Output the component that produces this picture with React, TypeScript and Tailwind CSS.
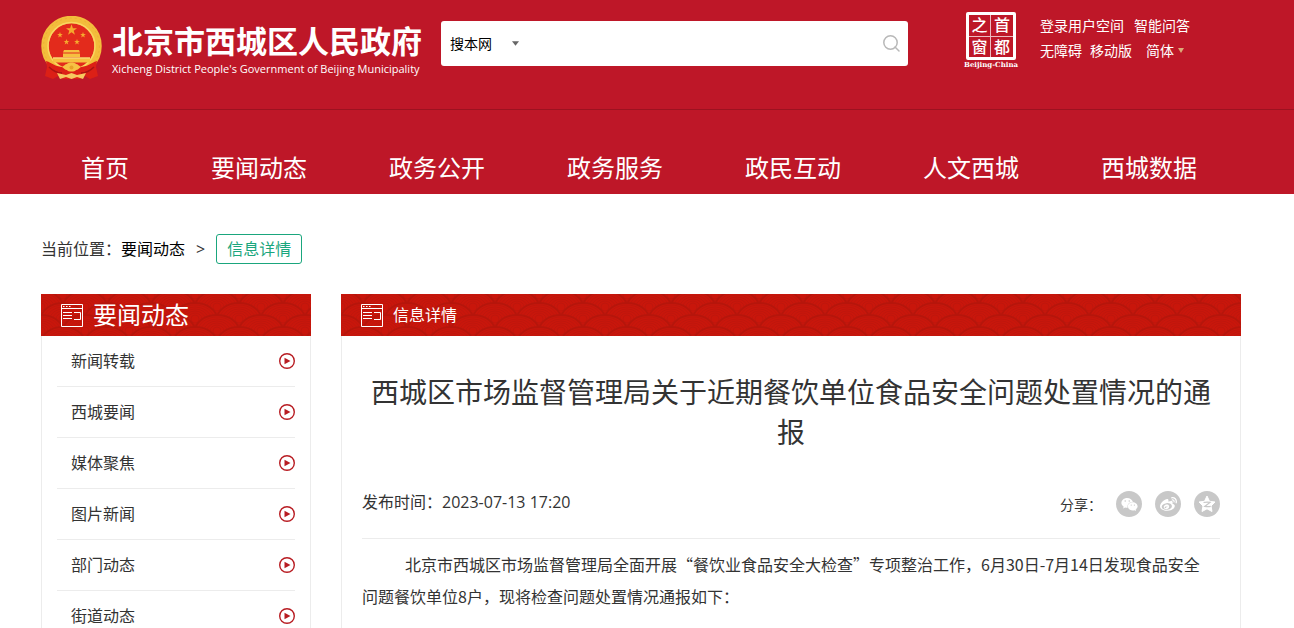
import { FaWeibo, FaWeixin } from 'react-icons/fa'

const NAV = ['首页', '要闻动态', '政务公开', '政务服务', '政民互动', '人文西城', '西城数据']
const CHANNELS = ['新闻转载', '西城要闻', '媒体聚焦', '图片新闻', '部门动态', '街道动态']

function Emblem() {
  const star = '0,-10 2.4,-3.2 9.5,-3.1 3.8,1.2 5.9,8.1 0,4 -5.9,8.1 -3.8,1.2 -9.5,-3.1 -2.4,-3.2'
  return (
    <svg viewBox="0 0 61 64" className="w-[61px] h-16" aria-hidden="true">
      <circle cx="30.5" cy="30" r="26.5" fill="#e32b1c" stroke="#f3bd3c" strokeWidth="7.5" />
      <circle cx="30.5" cy="30" r="28" fill="none" stroke="#ecb035" strokeWidth="1" strokeDasharray="2 3" />
      <circle cx="30.5" cy="30" r="23.5" fill="none" stroke="#f9d660" strokeWidth="1.500" />
      <g fill="#f5a92e">
        <polygon points={star} transform="translate(30.5 14) scale(.58)" />
        <polygon points={star} transform="translate(19 19) scale(.3)" />
        <polygon points={star} transform="translate(42 19) scale(.3)" />
        <polygon points={star} transform="translate(25.5 26) scale(.3)" />
        <polygon points={star} transform="translate(36 26) scale(.3)" />
      </g>
      <path d="M23 34h15l1 2.500h-17zM22 37.500h17v3.500h-17zM12 41.500h37v5h-37z" fill="#f6c040" />
      <path d="M12 42h37" stroke="#fbe08a" strokeWidth="1" />
      <path d="M5 45c6 2 10 6 17 6h17c7 0 11-4 17-6l-1 6 2 9-8 3-5-3-5 3h-17l-5-3-5 3-8-3 2-9z" fill="#dc2016" />
      <path d="M8 51c4 4 8 6 13 6M53 51c-4 4-8 6-13 6" stroke="#a91412" strokeWidth="1.500" fill="none" />
      <path d="M21 51c2-1 3-3 5-3 1-2 8-2 9 0 2 0 3 2 5 3-2 1-3 3-5 3-1 2-8 2-9 0-2 0-3-2-5-3z" fill="#f6c244" />
      <circle cx="30.5" cy="51.500" r="2" fill="#e8a128" />
      <path d="M16 57l9 2 5.500-2 5.500 2 9-2-3 6-6-2-5.500 2-5.500-2-6 2z" fill="#f6c860" />
    </svg>
  )
}

function WaveBar({ id }: { id: string }) {
  const rows = [
    [22, -16],
    [0, -4],
    [44, -4],
    [22, 8],
    [0, 20],
    [44, 20],
  ]
  return (
    <svg className="absolute inset-0 w-full h-full" aria-hidden="true">
      <defs>
        <pattern id={id} width="44" height="24" patternUnits="userSpaceOnUse">
          <rect width="44" height="24" fill="#c9160b" />
          {rows.map(([x, y]) => (
            <g key={`${x}-${y}`} transform={`translate(${x} ${y + 17})`} strokeWidth="1">
              <ellipse rx="22" ry="16" fill="#c9160b" stroke="#b6150b" strokeWidth="2" />
              <ellipse rx="19" ry="14" fill="none" stroke="#bf160c" />
              <ellipse rx="16" ry="12" fill="none" stroke="#bf160c" />
              <ellipse rx="13" ry="10" fill="none" stroke="#bf160c" />
              <ellipse rx="10" ry="8" fill="none" stroke="#bf160c" />
              <ellipse rx="7" ry="6" fill="none" stroke="#bf160c" />
              <ellipse rx="4" ry="4" fill="none" stroke="#bf160c" />
            </g>
          ))}
        </pattern>
      </defs>
      <rect width="100%" height="100%" fill={`url(#${id})`} />
    </svg>
  )
}

function WindowIcon() {
  return (
    <svg viewBox="0 0 22 23" className="relative w-[22px] h-[23px]" fill="none" stroke="#fff" aria-hidden="true">
      <path d="M.5.500h21v22H.500zM.500 4.500h21" />
      <path d="M2 2.500h1.500M5 2.500h1.500M8 2.500h1.500" />
      <path d="M2 8.500h9M2 11.500h9M2 14.500h9M13 8.500h6.500v7H13" />
    </svg>
  )
}

function PlayIcon() {
  return (
    <svg viewBox="0 0 16 16" className="size-4" aria-hidden="true">
      <circle cx="8" cy="8" r="7.300" fill="none" stroke="#b81c22" strokeWidth="1.400" />
      <path d="M5.500 4.700v6.600L11.500 8z" fill="#b81c22" />
    </svg>
  )
}

function QzoneIcon() {
  return (
    <svg viewBox="0 0 20 20" className="size-5" aria-hidden="true">
      <path
        d="M10 2l2.500 5.300 5.500.7-4 4 1 5.500-5-2.700-5 2.700 1-5.500-4-4 5.500-.7z"
        fill="#fff"
        stroke="#fff"
        strokeLinejoin="round"
      />
      <path d="M6.500 8.500c2.500-.4 4.500-.4 6.500-.1L7.700 12.400c2.200.4 4 .4 6 0" fill="none" stroke="#c8c8c8" strokeWidth="1.200" />
    </svg>
  )
}

function Seal() {
  return (
    <a href="#" className="flex w-[54px] flex-col items-center text-white" aria-label="首都之窗">
      <span className="grid w-[50px] h-12 grid-cols-2 rounded-xs border-3 border-white text-center text-[16px] leading-[20px] font-medium">
        <span className="border-r border-b border-white/70">之</span>
        <span className="border-b border-white/70">首</span>
        <span className="border-r border-white/70">窗</span>
        <span>都</span>
      </span>
      <span className="font-['DejaVu_Serif',serif] text-[7px] leading-[10px] font-bold whitespace-nowrap">Beijing-China</span>
    </a>
  )
}

function Header() {
  return (
    <header className="bg-[#be1728] text-white">
      <div className="flex h-[110px] items-start border-b border-[#9c1220] pl-[41px] pr-[53px]">
        <a href="#" className="flex shrink-0 gap-[10px] pt-4">
          <Emblem />
          <span className="flex w-[313px] flex-col pt-[7px]">
            <span className="text-[31px] leading-[37px] font-bold whitespace-nowrap">北京市西城区人民政府</span>
            <span className="text-[11px] leading-[18px] whitespace-nowrap">
              Xicheng District People's Government of Beijing Municipality
            </span>
          </span>
        </a>

        <form className="mt-[21px] ml-4 flex h-[45px] min-w-0 flex-1 items-center rounded-[3px] bg-white pr-2 pl-[9px] text-black">
          <label className="flex items-center">
            <select aria-label="搜索范围" className="w-[62px] appearance-none bg-transparent text-[14px] outline-none">
              <option>搜本网</option>
            </select>
            <svg viewBox="0 0 8 5" className="w-[7px] h-[5px]" aria-hidden="true">
              <path d="M0 0h8L4 5z" fill="#666" />
            </svg>
          </label>
          <input type="text" aria-label="搜索" className="ml-3 h-full min-w-0 flex-1 outline-none" />
          <button type="submit" aria-label="搜索">
            <svg viewBox="0 0 17 17" className="size-[17px]" fill="none" stroke="#b8b8b8" strokeWidth="1.500" aria-hidden="true">
              <circle cx="7.500" cy="7.500" r="6.700" />
              <path d="M12 12l4 4" strokeLinecap="round" />
            </svg>
          </button>
        </form>

        <div className="mt-3 ml-14 flex shrink-0 gap-[22px]">
          <Seal />
          <div className="w-[201px] pt-px text-[14px] leading-[25px]">
            <div className="flex gap-[10px]">
              <a href="#">登录用户空间</a>
              <a href="#">智能问答</a>
            </div>
            <div className="flex items-center">
              <a href="#">无障碍</a>
              <a href="#" className="ml-2">移动版</a>
              <button type="button" className="ml-[14px] flex items-center gap-1">
                简体
                <svg viewBox="0 0 6 5" className="w-[6px] h-[5px]" aria-hidden="true">
                  <path d="M0 0h6L3 5z" fill="#dcab78" />
                </svg>
              </button>
            </div>
          </div>
        </div>
      </div>

      <nav className="flex gap-[82px] pt-10 pb-2 pl-[81px] text-2xl leading-[36px] whitespace-nowrap">
        {NAV.map((item) => (
          <a key={item} href="#">{item}</a>
        ))}
      </nav>
    </header>
  )
}

function Sidebar() {
  return (
    <aside className="w-[270px] shrink-0">
      <h2 className="relative flex h-[42px] items-center gap-[10px] pl-5 text-2xl text-white">
        <WaveBar id="wave-side" />
        <WindowIcon />
        <span className="relative">要闻动态</span>
      </h2>
      <ul className="border-x border-[#ececec] px-[15px]">
        {CHANNELS.map((item) => (
          <li key={item} className="border-b border-[#ececec]">
            <a href="#" className="flex h-[50px] items-center justify-between pl-[14px]">
              {item}
              <PlayIcon />
            </a>
          </li>
        ))}
      </ul>
    </aside>
  )
}

function Article() {
  return (
    <section className="min-w-0 flex-1">
      <h2 className="relative flex h-[42px] items-center gap-[10px] pl-5 text-white">
        <WaveBar id="wave-main" />
        <WindowIcon />
        <span className="relative">信息详情</span>
      </h2>
      <article className="border-x border-[#ececec] px-5 pt-9 pb-10">
        <h1 className="text-center text-[28px] leading-[40px]">
          西城区市场监督管理局关于近期餐饮单位食品安全问题处置情况的通报
        </h1>
        <div className="mt-[35px] flex items-start justify-between border-b border-[#ececec] pb-[21px]">
          <p className="leading-[30px]">发布时间：2023-07-13 17:20</p>
          <div className="flex items-center gap-[13px] pt-1">
            <span className="mr-[1px] text-[14px]">分享：</span>
            <button type="button" aria-label="微信" className="flex size-[26px] items-center justify-center rounded-full bg-[#c8c8c8] text-white">
              <FaWeixin className="size-[17px]" />
            </button>
            <button type="button" aria-label="微博" className="flex size-[26px] items-center justify-center rounded-full bg-[#c8c8c8] text-white">
              <FaWeibo className="size-[17px]" />
            </button>
            <button type="button" aria-label="QQ空间" className="flex size-[26px] items-center justify-center rounded-full bg-[#c8c8c8]">
              <QzoneIcon />
            </button>
          </div>
        </div>
        <p className="mt-[9px] pr-3 indent-[43px] font-['Noto_Sans_CJK_SC',sans-serif] leading-8">
          北京市西城区市场监督管理局全面开展“餐饮业食品安全大检查”专项整治工作，6月30日-7月14日发现食品安全问题餐饮单位8户，现将检查问题处置情况通报如下：
        </p>
      </article>
    </section>
  )
}

export default function App() {
  return (
    <div lang="zh-CN" className="h-screen overflow-hidden bg-white font-['Open_Sans','Noto_Sans_CJK_SC',sans-serif] text-base text-[#333]">
      <Header />
      <main className="pl-[41px] pr-[53px]">
        <div className="flex items-center pt-10 pb-[30px]">
          <span>当前位置：</span>
          <a href="#" className="text-black">要闻动态</a>
          <span className="mx-[11px]">&gt;</span>
          <span className="rounded-[3px] border border-[#1aa67d] px-[10px] leading-[28px] text-[#1aa67d]">信息详情</span>
        </div>
        <div className="flex items-start gap-[30px]">
          <Sidebar />
          <Article />
        </div>
      </main>
    </div>
  )
}
